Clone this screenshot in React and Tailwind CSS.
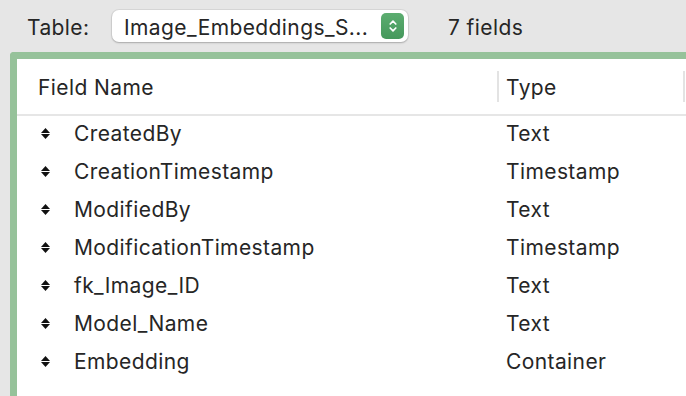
import React from "react";

const fields = [
  { name: "CreatedBy", type: "Text" },
  { name: "CreationTimestamp", type: "Timestamp" },
  { name: "ModifiedBy", type: "Text" },
  { name: "ModificationTimestamp", type: "Timestamp" },
  { name: "fk_Image_ID", type: "Text" },
  { name: "Model_Name", type: "Text" },
  { name: "Embedding", type: "Container" },
];

function SortHandle() {
  return (
    <svg width="9" height="11" viewBox="0 0 9 11" className="shrink-0">
      <path d="M4.5 0 L9 4.9 H0 Z" fill="#111" />
      <path d="M4.5 11 L9 6.1 H0 Z" fill="#111" />
    </svg>
  );
}

function Stepper() {
  return (
    <div className="flex h-[26px] w-[23px] items-center justify-center rounded-[5px] bg-gradient-to-b from-[#5cad70] to-[#45985c]">
      <svg width="10" height="16" viewBox="0 0 10 16" fill="none" stroke="white" strokeWidth="1.7" strokeLinecap="round" strokeLinejoin="round">
        <path d="M2.2 6 L5 3.2 L7.8 6" />
        <path d="M2.2 10 L5 12.8 L7.8 10" />
      </svg>
    </div>
  );
}

export default function App() {
  return (
    <div className="flex h-[396px] w-[686px] flex-col overflow-hidden bg-[#e6e6e6] font-['Inter',sans-serif] text-[21px] tracking-[0.4px] text-[#262626]">
      <div className="flex h-[52px] shrink-0 items-center pb-[1px] pl-[27px]">
        <span className="w-[85px] pt-[4px] leading-none">Table:</span>
        <div className="flex h-[32px] w-[296px] items-center justify-between rounded-[7px] bg-white pl-[12px] pr-[4px] shadow-[0_0_0_1px_rgba(0,0,0,0.06),0_1px_2px_rgba(0,0,0,0.22)]">
          <span className="pt-[3px] leading-none">Image_Embeddings_S...</span>
          <Stepper />
        </div>
        <span className="ml-[40px] pt-[3px] leading-none">7 fields</span>
      </div>
      <div className="ml-[10px] w-[700px] flex-1 rounded-tl-[4px] border-l-[7px] border-t-[7px] border-[#96c29a] bg-white">
        <div className="flex h-[57px] items-center border-b-2 border-[#e6e6e6]">
          <div className="flex w-[480px] items-center pl-[21px] pt-[3px]">Field Name</div>
          <div className="h-[31px] w-[2px] bg-[#e3e3e3]" />
          <div className="flex w-[184px] items-center pl-[7px] pt-[3px]">Type</div>
          <div className="h-[31px] w-[2px] bg-[#e3e3e3]" />
        </div>
        <div className="flex flex-col">
          {fields.map((f) => (
            <div key={f.name} className="flex h-[38px] items-start pt-[5px]">
              <div className="flex h-[24px] w-[482px] items-center">
                <div className="ml-[24px] flex w-[33px] items-center">
                  <SortHandle />
                </div>
                <span className="pt-[1px] leading-[24px]">{f.name}</span>
              </div>
              <span className="pl-[7px] pt-[1px] leading-[24px]">{f.type}</span>
            </div>
          ))}
        </div>
      </div>
    </div>
  );
}
